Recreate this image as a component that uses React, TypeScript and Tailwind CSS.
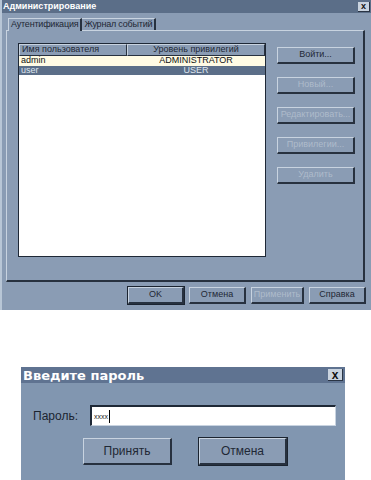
import React from 'react';

const font = { fontFamily: '"Liberation Sans", Arial, sans-serif' };

const Btn = ({ label, disabled, w = 'w-[78px]', h = 'h-[17px]', text = 'text-[9px]', def = false }: { label: string; disabled?: boolean; w?: string; h?: string; text?: string; def?: boolean }) => (
  <div
    className={`${w} ${h} ${text} flex items-center justify-center border-t border-l border-t-[#c8d3e0] border-l-[#c8d3e0] border-b-2 border-r-2 border-b-[#27313f] border-r-[#27313f] bg-[#8a9cb4] ${
      disabled ? 'text-[#aebbcb]' : 'text-[#1f2835]'
    } ${def ? 'outline outline-1 outline-[#1b2430]' : ''}`}
  >
    {label}
  </div>
);

export default function App() {
  const sideButtons = [
    { label: 'Войти...', disabled: false },
    { label: 'Новый...', disabled: true },
    { label: 'Редактировать...', disabled: true },
    { label: 'Привилегии...', disabled: true },
    { label: 'Удалить', disabled: true },
  ];

  return (
    <div className="w-[371px] h-[480px] bg-white overflow-hidden" style={font}>
      {/* Администрирование */}
      <div className="w-[371px] h-[310px] bg-[#8a9cb4] border-l-2 border-l-[#b8c6d6] flex flex-col">
        <div className="h-[13px] bg-[#5b6e88] flex items-center justify-between pl-[1px] pr-[1px]">
          <span className="text-white font-bold text-[9px] leading-none">Администрирование</span>
          <div className="w-[12px] h-[10px] bg-[#c9d3df] border-b border-r border-[#2a3444] flex items-center justify-center text-[#111] font-bold text-[9px] leading-none">
            x
          </div>
        </div>

        <div className="flex flex-col pl-[4px] pr-[4px] pt-[4px]">
          <div className="flex h-[13px] items-end pl-[2px] text-[9px] tracking-[-0.2px]">
            <div className="h-[13px] px-[2px] flex items-center text-[#1f2835] border-t border-l border-[#c8d3e0] border-r-2 border-r-[#27313f] bg-[#8a9cb4] relative z-10 -mb-px">
              Аутентификация
            </div>
            <div className="h-[12px] px-[2px] flex items-center text-[#1f2835] border-t border-[#c8d3e0] border-r-2 border-r-[#27313f]">
              Журнал событий
            </div>
          </div>

          <div className="h-[252px] w-[359px] border-t border-l border-[#c8d3e0] border-b-2 border-r-2 border-b-[#27313f] border-r-[#27313f] flex pl-[11px] pt-[12px] gap-[11px]">
            <div className="w-[248px] h-[214px] bg-white border border-[#1e2836] flex flex-col text-[9px]">
              <div className="flex h-[12px] bg-[#8a9cb4] text-[#1f2835]">
                <div className="w-[108px] flex items-center pl-[2px] border-t border-l border-[#c8d3e0] border-b border-r border-b-[#27313f] border-r-[#27313f]">
                  Имя пользователя
                </div>
                <div className="flex-1 flex items-center justify-center border-t border-l border-[#c8d3e0] border-b border-r border-b-[#27313f] border-r-[#27313f]">
                  Уровень привилегий
                </div>
              </div>
              <div className="flex h-[10px] bg-[#fffbe4] text-[#111] items-center">
                <div className="w-[108px] pl-[2px]">admin</div>
                <div className="flex-1 text-center">ADMINISTRATOR</div>
              </div>
              <div className="flex h-[9px] bg-[#5b6e88] text-[#dfe6ef] items-center">
                <div className="w-[108px] pl-[2px]">user</div>
                <div className="flex-1 text-center">USER</div>
              </div>
            </div>

            <div className="flex flex-col gap-[13px] pt-[4px]">
              {sideButtons.map((b) => (
                <Btn key={b.label} label={b.label} disabled={b.disabled} />
              ))}
            </div>
          </div>
        </div>

        <div className="flex justify-end gap-[5px] pr-[5px] pt-[5px]">
          <Btn label="OK" w="w-[56px]" def />
          <Btn label="Отмена" w="w-[57px]" />
          <Btn label="Применить" w="w-[53px]" disabled />
          <Btn label="Справка" w="w-[57px]" />
        </div>
      </div>

      {/* Введите пароль */}
      <div className="ml-[21px] mt-[57px] w-[324px] h-[113px] bg-[#8196b0] flex flex-col">
        <div className="h-[16px] bg-[#5f7391] flex items-center justify-between pl-[2px] pr-[2px]">
          <span className="text-white font-bold text-[13px] leading-none" style={{ fontFamily: '"DejaVu Sans", Verdana, sans-serif' }}>
            Введите пароль
          </span>
          <div className="w-[15px] h-[12px] bg-[#c9d3df] border-b border-r border-[#2a3444] flex items-center justify-center text-[#111] font-bold text-[12px] leading-none">
            x
          </div>
        </div>

        <div className="flex items-center pl-[12px] pt-[22px] gap-[12px]">
          <span className="text-[12px] text-[#1b2430]">Пароль:</span>
          <div className="w-[246px] h-[21px] bg-white border-t-2 border-l-2 border-[#1e2836] border-b border-r border-b-[#c8d3e0] border-r-[#c8d3e0] flex items-center pl-[2px]">
            <span className="text-[7px] text-[#222] leading-none">xxxx</span>
            <span className="w-px h-[13px] bg-black ml-[1px]" />
          </div>
        </div>

        <div className="flex pl-[62px] pt-[12px] gap-[27px]">
          <Btn label="Принять" w="w-[89px]" h="h-[27px]" text="text-[12px]" />
          <Btn label="Отмена" w="w-[88px]" h="h-[27px]" text="text-[12px]" def />
        </div>
      </div>
    </div>
  );
}
